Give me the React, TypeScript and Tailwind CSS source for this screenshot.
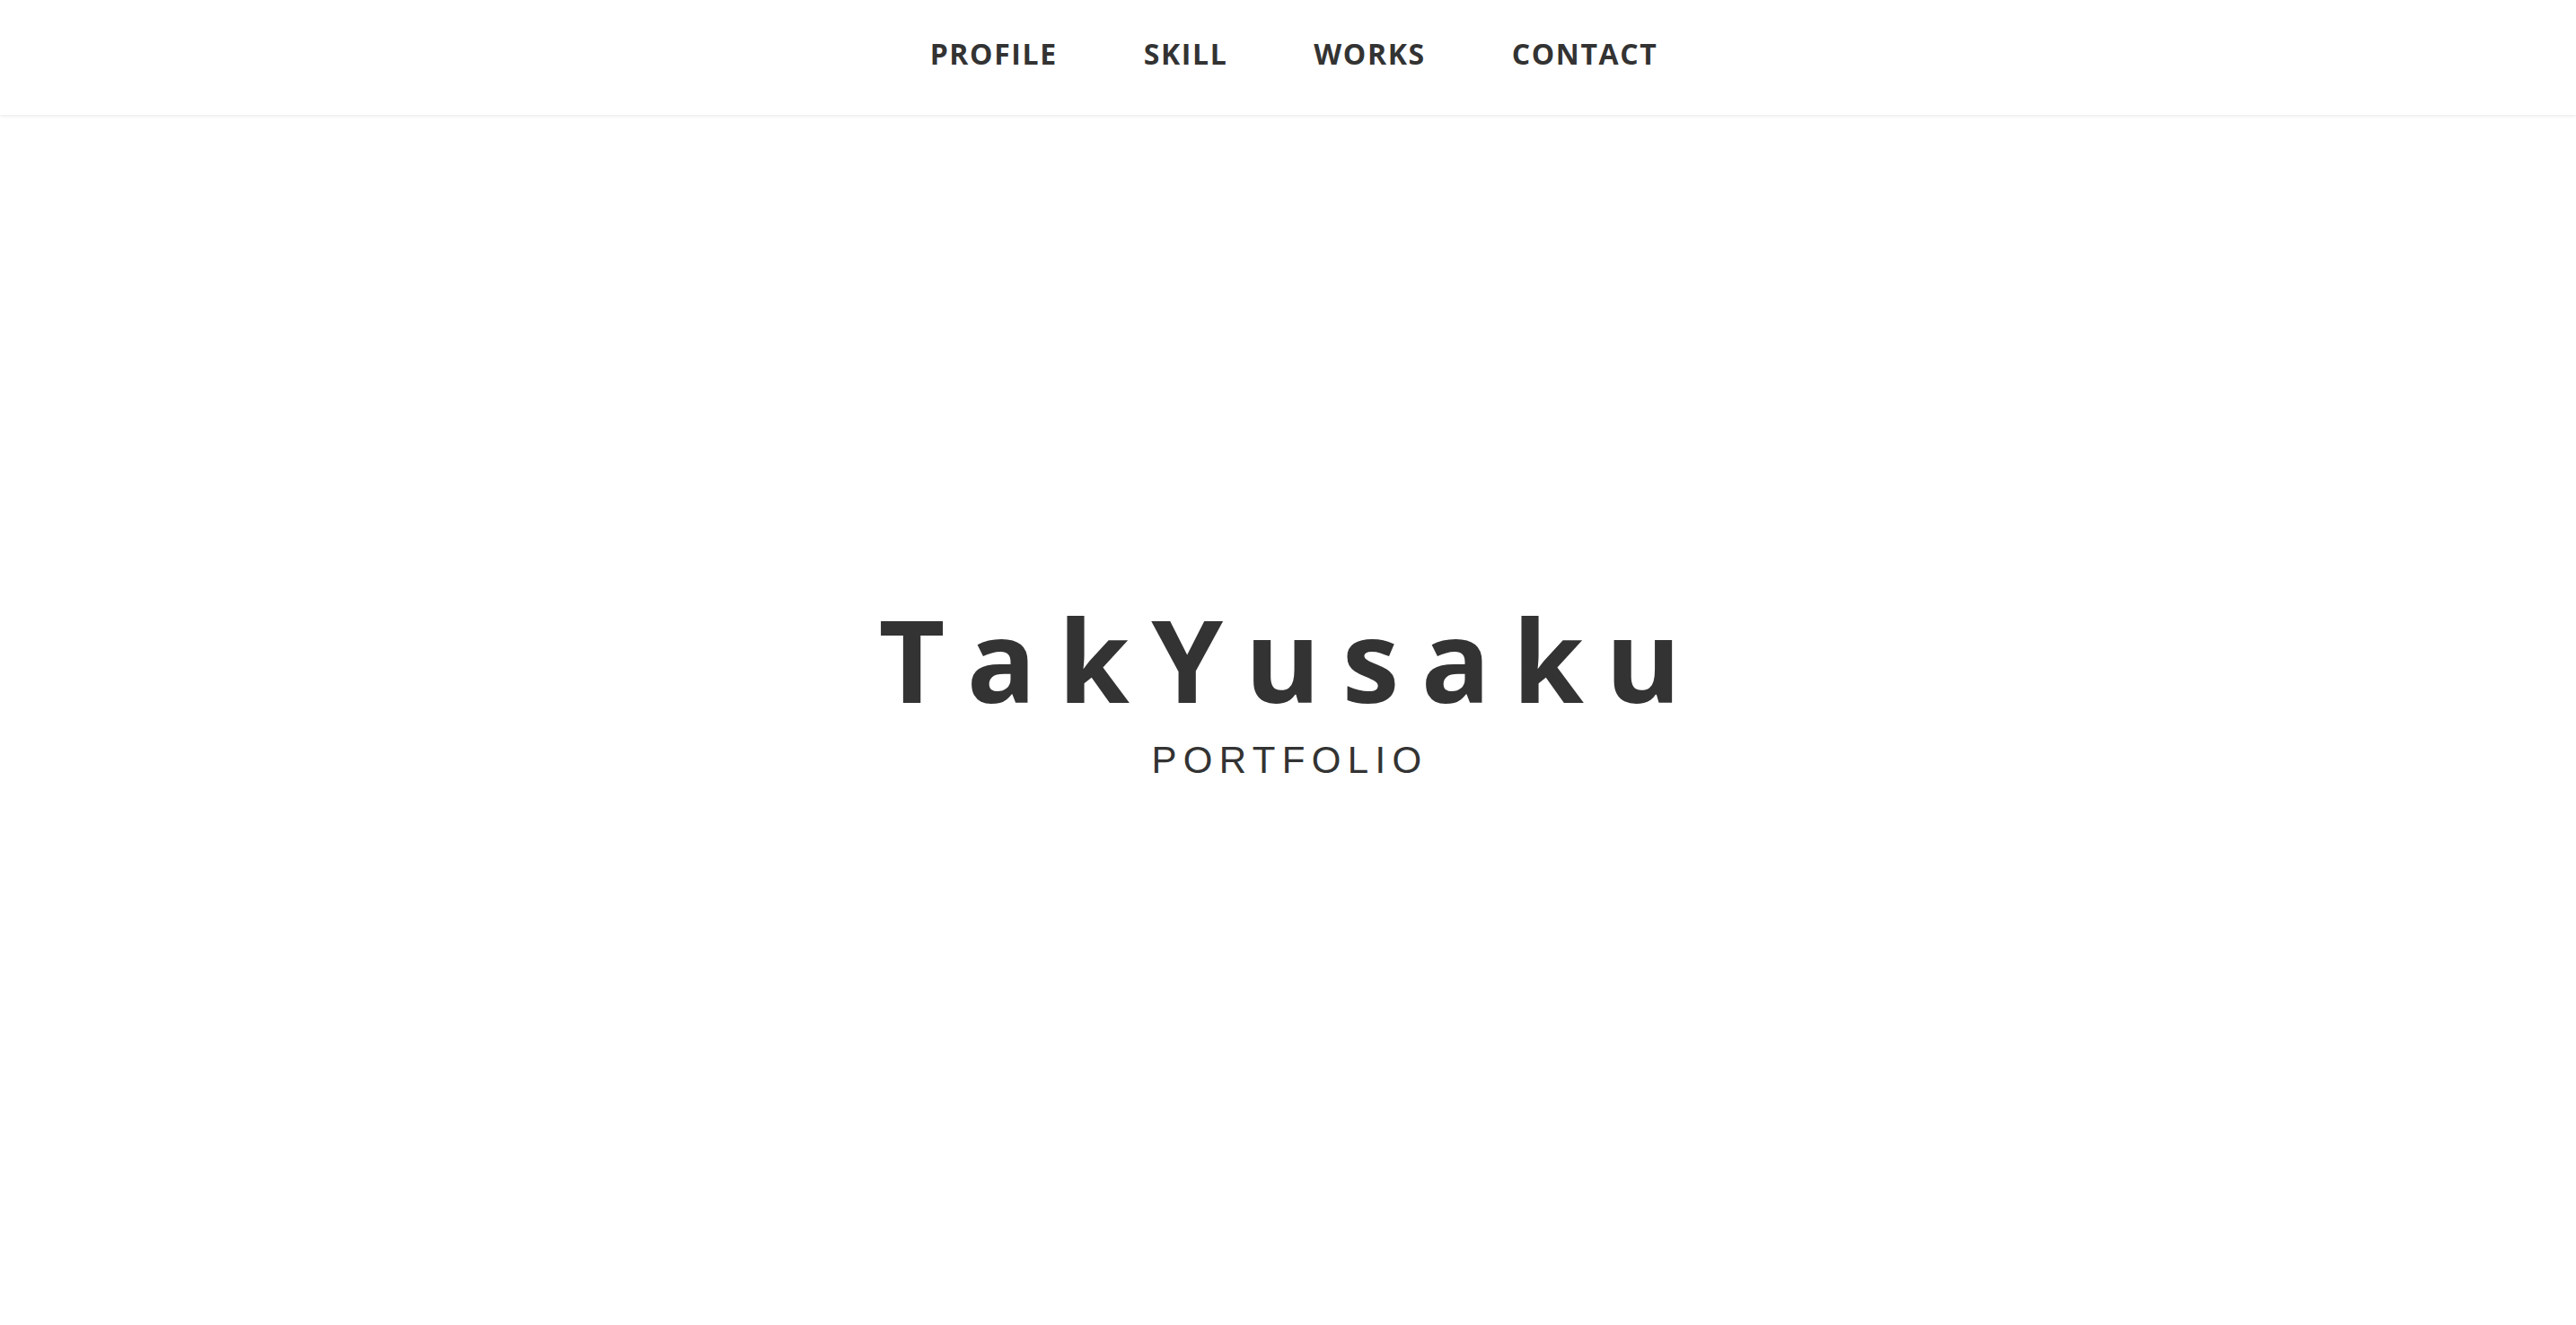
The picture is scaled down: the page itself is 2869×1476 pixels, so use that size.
import React from "react";

export default function App() {
  const items = ["PROFILE", "SKILL", "WORKS", "CONTACT"];
  return (
    <div className="w-full min-h-screen bg-white text-[#333333]">
      <header className="relative z-10 h-[128px] bg-white shadow-[0_1px_4px_rgba(0,0,0,0.1)]">
        <nav className="flex justify-center pt-[44px] pl-[13px]">
          <ul className="flex gap-[96px]">
            {items.map((t) => (
              <li
                key={t}
                className="font-['Open_Sans',sans-serif] font-bold text-[32px] leading-none tracking-[0.05em]"
              >
                {t}
              </li>
            ))}
          </ul>
        </nav>
      </header>
      <main className="flex flex-col items-center pt-[542px] h-[1348px]">
        <h1 className="font-['Open_Sans',sans-serif] font-bold text-[128px] leading-none tracking-[0.19em] pl-[6px]">
          TakYusaku
        </h1>
        <p className="mt-[28px] font-['Liberation_Sans',Arial,sans-serif] text-[42px] leading-none tracking-[0.175em] pl-[4px]">
          PORTFOLIO
        </p>
      </main>
    </div>
  );
}
